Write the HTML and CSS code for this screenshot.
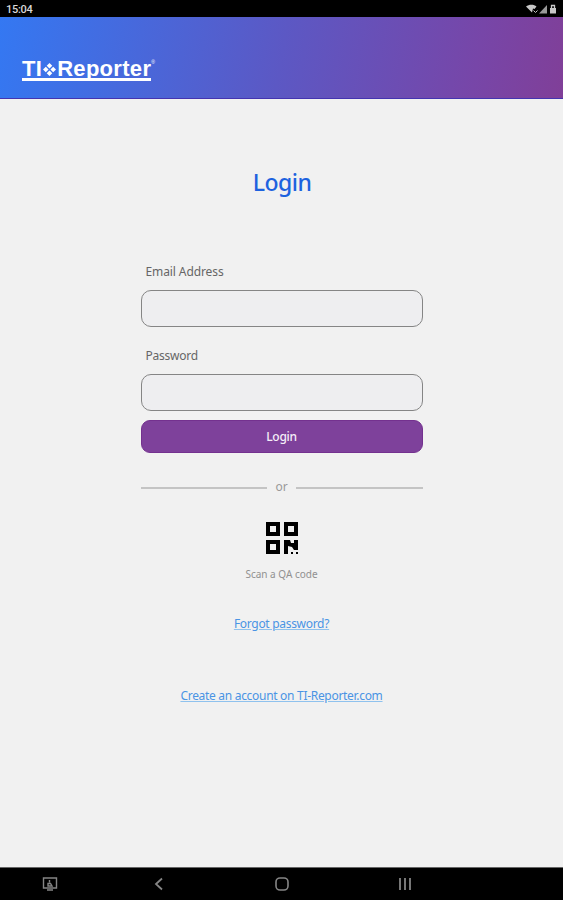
FILE: index.html
```html
<!DOCTYPE html>
<html lang="en">
<head>
    <meta charset="UTF-8">
    <meta name="viewport" content="width=device-width, initial-scale=1.0">
    <title>TI-Reporter</title>
    <link rel="stylesheet" href="styles.css">
</head>
<body>
    <div class="status">
        <span class="time">15:04</span>
        <svg class="status-icons" width="32" height="10" viewBox="0 0 32 10" fill="#c8c8c8">
            <path d="M0 2.500C3 0 8 0 10.500 2.500L8.500 5L7 4.500L6 8.500Z"/>
            <path d="M7.500 6.500L9.500 8.500L11.500 6.500" fill="none" stroke="#c8c8c8"/>
            <path d="M13 9.500L21 1V9.500Z" fill="#999"/>
            <path d="M24 4H30V9.500H24Z"/>
            <path d="M25.500 4V1.500H28.500V4" fill="none" stroke="#c8c8c8" stroke-width="1.300"/>
        </svg>
    </div>
    <header class="header">
        <div class="logo">
            <span class="logo-text">TI</span>
            <svg class="logo-mark" width="13" height="13" viewBox="0 0 14 14" fill="#fff">
                <path d="M7 0L10 3L7 6L4 3ZM3 4L6 7L3 10L0 7ZM11 4L14 7L11 10L8 7ZM7 8L10 11L7 14L4 11Z"/>
            </svg>
            <span class="logo-text">Reporter</span>
        </div>
        <span class="reg">®</span>
    </header>
    <main class="main">
        <h1 class="title">Login</h1>
        <form class="form">
            <label class="label label-email" for="email">Email Address</label>
            <input class="input" id="email" type="email">
            <label class="label label-password" for="password">Password</label>
            <input class="input" id="password" type="password">
            <button class="button" type="button">Login</button>
        </form>
        <div class="or"><span>or</span></div>
        <svg class="qr" width="32" height="32" viewBox="0 0 32 32">
            <path fill="none" stroke="#000" stroke-width="4" d="M2 2H12V12H2ZM20 2H30V12H20ZM2 20H12V30H2Z"/>
            <path d="M18 18H24L25 21H28V18H32V28H28L26 25L22 24V32H18ZM25 30H27V32H25ZM30 30H32V32H30Z"/>
        </svg>
        <div class="scan">Scan a QA code</div>
        <a class="link forgot" href="#">Forgot password?</a>
        <a class="link create" href="#">Create an account on TI-Reporter.com</a>
    </main>
    <nav class="nav">
        <svg width="16" height="14" viewBox="0 0 16 14" fill="none" stroke="#858585" stroke-width="1.400">
            <path d="M1.500 1H14.500V11H1.500ZM5 13H11"/>
            <path d="M7.500 3V5.500M6 9V6.500H8.500L10 9Z"/>
        </svg>
        <svg width="16" height="14" viewBox="0 0 16 14" fill="none" stroke="#858585" stroke-width="1.800">
            <path d="M11 1.500L5 7L11 12.500"/>
        </svg>
        <svg width="16" height="14" viewBox="0 0 16 14" fill="none" stroke="#858585" stroke-width="1.600">
            <rect x="2" y="1" width="12" height="12" rx="4"/>
        </svg>
        <svg width="16" height="14" viewBox="0 0 16 14" fill="none" stroke="#777" stroke-width="2">
            <path d="M3 1V13M8 1V13M13 1V13"/>
        </svg>
    </nav>
</body>
</html>
```
FILE: styles.css
```css
* {
    box-sizing: border-box;
}

body {
    margin: 0;
    height: 900px;
    display: flex;
    flex-direction: column;
    background: #f1f1f1;
    font-family: "Noto Sans", "Open Sans", sans-serif;
    overflow: hidden;
}

.status {
    height: 17px;
    padding: 1px 5px 0 6px;
    display: flex;
    align-items: center;
    justify-content: space-between;
    background: #000;
}

.time {
    color: #d8d8d8;
    font: 500 11px Roboto, sans-serif;
    letter-spacing: -0.3px;
}

.header {
    height: 82px;
    padding: 41px 0 0 22px;
    display: flex;
    align-items: flex-start;
    background: linear-gradient(100deg, #3478f2 0%, #5c58c4 50%, #7746a8 84%, #803f98 100%);
    border-bottom: 1px solid #4434b0;
    color: #fff;
}

.logo {
    height: 23px;
    padding-top: 2px;
    display: flex;
    align-items: center;
    border-bottom: 3px solid #fff;
    font-family: "Liberation Sans", Arial, sans-serif;
    font-weight: bold;
    font-size: 22px;
    line-height: 24px;
    letter-spacing: 0.3px;
}

.logo-mark {
    margin: 0 1px;
}

.reg {
    font: 5px "Liberation Sans", sans-serif;
    margin-top: 1px;
}

.main {
    height: 768px;
    display: flex;
    flex-direction: column;
    align-items: center;
}

.title {
    margin: 68px 0 0 1px;
    height: 32px;
    color: #1d62df;
    font-size: 23px;
    line-height: 31px;
    font-weight: 500;
    letter-spacing: -0.5px;
}

.form {
    width: 282px;
    margin-top: 64px;
    display: flex;
    flex-direction: column;
}

.label {
    height: 18px;
    margin-left: 5px;
    color: #666;
    font-size: 12px;
    line-height: 18px;
    letter-spacing: -0.1px;
}

.label-password {
    margin-top: 20px;
    letter-spacing: -0.25px;
}

.input {
    width: 100%;
    height: 37px;
    margin-top: 9px;
    padding: 0 10px;
    border: 1px solid #858585;
    border-radius: 10px;
    background: #eeeef0;
}

.button {
    height: 33px;
    margin-top: 9px;
    padding: 0;
    border: 1px solid #74318f;
    border-radius: 9px;
    background: #7e419b;
    color: #f5eef8;
    font-family: inherit;
    font-size: 12px;
    font-weight: 500;
    letter-spacing: -0.3px;
}

.or {
    width: 282px;
    height: 18px;
    margin-top: 25px;
    display: flex;
    align-items: center;
    gap: 8px;
    color: #999;
    font-size: 12px;
    line-height: 18px;
}

.or::before,
.or::after {
    content: "";
    flex: 1;
    height: 2px;
    margin-top: 2px;
    background: #c4c4c4;
}

.qr {
    margin-top: 26px;
}

.scan {
    margin-top: 12px;
    color: #909090;
    font-size: 10px;
    line-height: 16px;
}

.link {
    color: #4a94e4;
    font-size: 12px;
    line-height: 18px;
    letter-spacing: -0.3px;
    text-decoration-color: #8fc2ee;
    text-underline-offset: 1px;
}

.forgot {
    margin-top: 33px;
}

.create {
    margin-top: 54px;
}

.nav {
    height: 33px;
    padding-left: 42px;
    display: grid;
    grid-template-columns: 109px 123px 123px 16px;
    align-items: center;
    background: #000;
    border-top: 1px solid #666;
}
```
